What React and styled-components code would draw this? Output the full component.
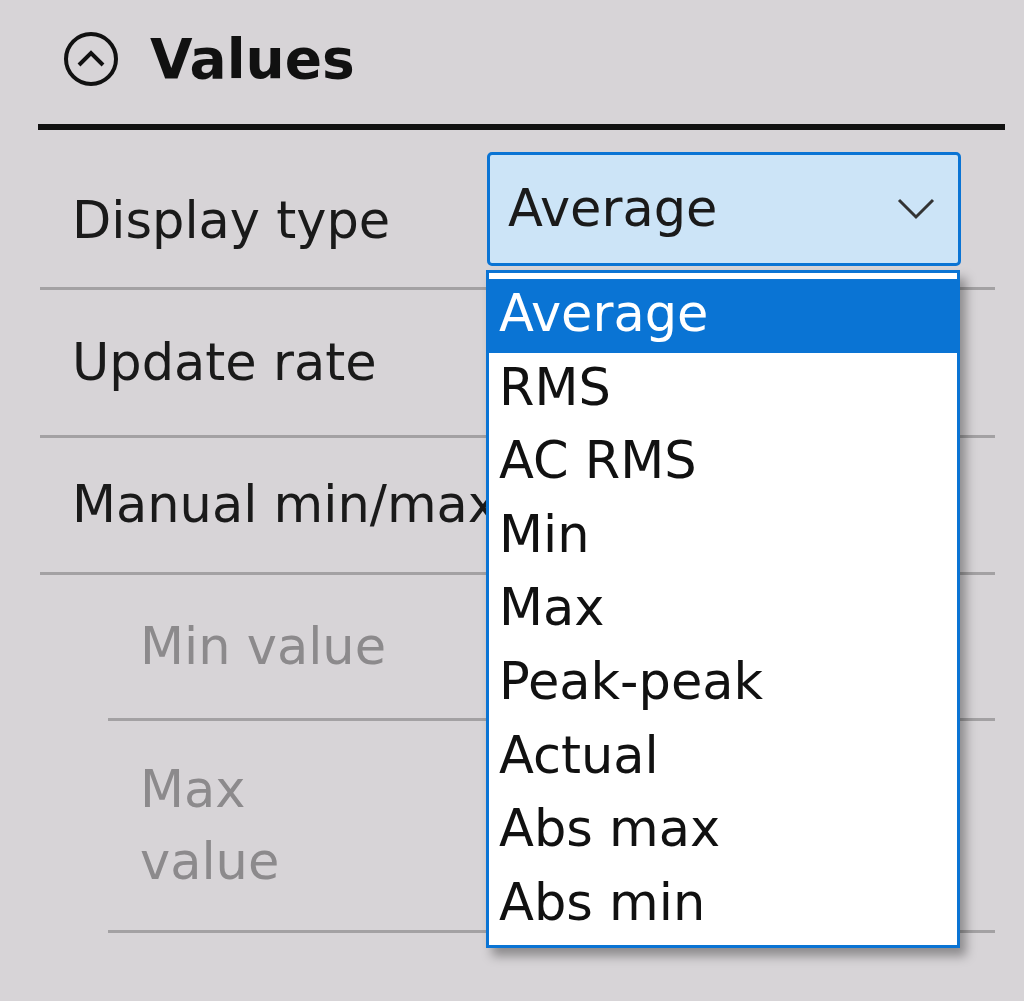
import React from "react";
import styled, { createGlobalStyle } from "styled-components";

const G = createGlobalStyle`
  html,body{margin:0;padding:0;background:#d7d4d7;}
  body{font-family:"DejaVu Sans","Liberation Sans",sans-serif;}
`;
const Page = styled.div`width:1024px;height:1001px;background:#d7d4d7;position:relative;overflow:hidden;`;
const Header = styled.div`display:flex;align-items:center;gap:30px;height:118px;padding-left:62px;box-sizing:border-box;`;
const Title = styled.div`font-weight:bold;font-size:55px;color:#111;`;
const Rule = styled.div`margin:6px 19px 0 38px;height:6px;background:#111;`;
const Row = styled.div`
  display:flex;align-items:center;height:${p=>p.h}px;
  margin-left:${p=>p.indent?108:40}px;margin-right:29px;
  padding-left:32px;box-sizing:border-box;
  border-bottom:3px solid #a3a1a3;
  font-size:51px;color:${p=>p.dim?"#8c8a8c":"#1a1a1a"};line-height:72px;
  position:relative;white-space:${p=>p.wrap?"normal":"nowrap"};
`;
const Label = styled.div`width:${p=>p.w||415}px;`;
const Select = styled.div`
  position:absolute;left:447px;top:-2px;width:474px;height:114px;box-sizing:border-box;
  background:#cce4f7;border:3px solid #0a74d4;border-radius:5px;
  display:flex;align-items:center;padding-left:18px;font-size:51px;color:#1a1a1a;
`;
const Chev = styled.svg`position:absolute;right:22px;top:42px;`;
const Menu = styled.div`
  position:absolute;left:486px;top:270px;width:474px;height:678px;box-sizing:border-box;
  background:#fff;border:3px solid #0a74d4;box-shadow:6px 8px 10px rgba(0,0,0,0.35);
  padding-top:6px;z-index:2;
`;
const Item = styled.div`
  height:73.6px;line-height:70px;font-size:51px;padding-left:10px;white-space:nowrap;
  background:${p=>p.sel?"#0a74d4":"transparent"};color:${p=>p.sel?"#fff":"#111"};
`;
const items=["Average","RMS","AC RMS","Min","Max","Peak-peak","Actual","Abs max","Abs min"];

export default function App(){
  return <Page><G/>
    <Header>
      <svg width="58" height="58" viewBox="0 0 58 58"><circle cx="29" cy="29" r="25" fill="none" stroke="#111" strokeWidth="4"/><path d="M17 35 L29 23 L41 35" fill="none" stroke="#111" strokeWidth="4"/></svg>
      <Title>Values</Title>
    </Header>
    <Rule/>
    <div style={{height:24}}/>
    <Row h={136}>
      <Label>Display type</Label>
      <Select>Average<Chev width="40" height="24" viewBox="0 0 40 24"><path d="M3 3 L20 20 L37 3" fill="none" stroke="#333" strokeWidth="3"/></Chev></Select>
    </Row>
    <Row h={148}><Label>Update rate</Label></Row>
    <Row h={137}><Label>Manual min/max</Label></Row>
    <Row h={146} indent dim><Label>Min value</Label></Row>
    <Row h={212} indent dim wrap><Label w={200}>Max value</Label></Row>
    <Menu>{items.map((t,i)=><Item key={t} sel={i===0}>{t}</Item>)}</Menu>
  </Page>;
}
